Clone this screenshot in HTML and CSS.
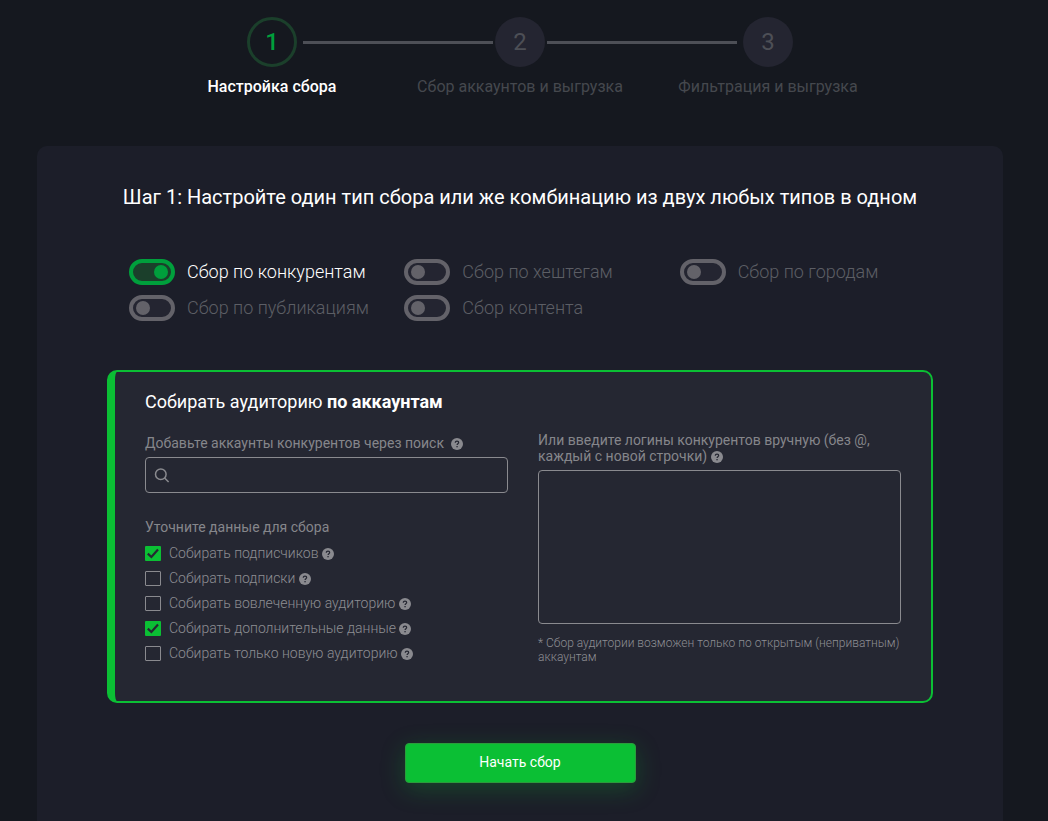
FILE: index.html
```html
<!DOCTYPE html>
<html lang="ru">
<head>
	<meta charset="UTF-8">
	<meta name="viewport" content="width=device-width, initial-scale=1">
	<title>Настройка сбора</title>
<link rel="stylesheet" href="styles.css">
</head>
<body>
	<svg class="sprite" width="0" height="0" aria-hidden="true">
		<symbol id="help" viewBox="0 0 12 12">
			<circle cx="6" cy="6" r="6" fill="#8a8a8f"/>
			<path d="M4.3 4.8C4.3 3.7 5 3.1 6 3.1s1.7.6 1.7 1.5c0 1.2-1.6 1.2-1.6 2.5" fill="none" stroke="#252732" stroke-width="1.2"/>
			<rect x="5.4" y="8" width="1.3" height="1.3" fill="#252732"/>
		</symbol>
	</svg>
	<ol class="steps">
		<li class="step active">
			<div class="track"><i class="line"></i><span class="num">1</span><i class="line"></i></div>
			<div class="name">Настройка сбора</div>
		</li>
		<li class="step middle">
			<div class="track"><i class="line"></i><span class="num">2</span><i class="line"></i></div>
			<div class="name">Сбор аккаунтов и выгрузка</div>
		</li>
		<li class="step">
			<div class="track"><i class="line"></i><span class="num">3</span><i class="line"></i></div>
			<div class="name">Фильтрация и выгрузка</div>
		</li>
	</ol>

	<form class="card">
		<h1>Шаг 1: Настройте один тип сбора или же комбинацию из двух любых типов в одном</h1>
		<div class="types">
			<label class="type"><input type="checkbox" class="switch" checked><span>Сбор по конкурентам</span></label>
			<label class="type"><input type="checkbox" class="switch"><span>Сбор по хештегам</span></label>
			<label class="type"><input type="checkbox" class="switch"><span>Сбор по городам</span></label>
			<label class="type"><input type="checkbox" class="switch"><span>Сбор по публикациям</span></label>
			<label class="type"><input type="checkbox" class="switch"><span>Сбор контента</span></label>
		</div>

		<section class="box">
			<h2>Собирать аудиторию <b>по аккаунтам</b></h2>
			<div class="columns">
				<div class="column search-column">
					<label class="caption" for="search">Добавьте аккаунты конкурентов через поиск <svg class="help wide"><use href="#help"/></svg></label>
					<div class="search">
						<svg class="loupe" viewBox="0 0 16 16"><circle cx="6.8" cy="7.2" r="5.3"/><path d="M10.6 11l4 4"/></svg>
						<input type="text" id="search">
					</div>
					<p class="caption data">Уточните данные для сбора</p>
					<ul class="options">
						<li><input type="checkbox" id="o1" checked><label for="o1">Собирать подписчиков</label><svg class="help"><use href="#help"/></svg></li>
						<li><input type="checkbox" id="o2"><label for="o2">Собирать подписки</label><svg class="help"><use href="#help"/></svg></li>
						<li><input type="checkbox" id="o3"><label for="o3">Собирать вовлеченную аудиторию</label><svg class="help"><use href="#help"/></svg></li>
						<li><input type="checkbox" id="o4" checked><label for="o4">Собирать дополнительные данные</label><svg class="help"><use href="#help"/></svg></li>
						<li><input type="checkbox" id="o5"><label for="o5">Собирать только новую аудиторию</label><svg class="help"><use href="#help"/></svg></li>
					</ul>
				</div>
				<div class="column">
					<label class="caption" for="logins">Или введите логины конкурентов вручную (без @, каждый с новой строчки) <svg class="help"><use href="#help"/></svg></label>
					<textarea id="logins"></textarea>
					<p class="note">* Сбор аудитории возможен только по открытым (неприватным) аккаунтам</p>
				</div>
			</div>
		</section>
		<button type="submit" class="start">Начать сбор</button>
	</form>
</body>
</html>
```
FILE: styles.css
```css
*{box-sizing: border-box;}
body,h1,h2,p,ol,ul,li,input,textarea{padding: 0;margin: 0;}
li{list-style: none;}
body{
	min-height: 100vh;
	padding: 17px 45px 0 37px;
	display: flex;
	flex-direction: column;
	background: #15181f;
	color: #fff;
	font-family: Roboto, "Liberation Sans", sans-serif;
}
.sprite{
	position: absolute;
}
.steps{
	width: 100%;
	max-width: 744px;
	margin: 0 auto;
	display: grid;
	grid-template-columns: repeat(3, 1fr);
}
.track{
	display: flex;
	align-items: center;
	gap: 6px;
}
.middle .track{
	gap: 2px;
}
.line{
	flex: 1;
	height: 3px;
	background: #4d4f56;
}
.step:first-child .line:first-child,
.step:last-child .line:last-child{
	background: none;
}
.num{
	width: 50px;
	height: 50px;
	line-height: 50px;
	border-radius: 50%;
	background: #242531;
	color: #4d4f56;
	font-size: 24px;
	text-align: center;
}
.name{
	margin-top: 10px;
	color: #45484e;
	font-size: 16px;
	line-height: 20px;
	text-align: center;
}
.active .num{
	line-height: 44px;
	border: 3px solid #1b3f2b;
	background: none;
	color: #009f3c;
	font-weight: 500;
}
.active .name{
	color: #fff;
	font-weight: 500;
}
.card{
	flex: 1;
	margin-top: 49px;
	padding: 38px 70px;
	border-radius: 10px 10px 0 0;
	background: #1c1e29;
}
h1{
	font-size: 20px;
	font-weight: 400;
	line-height: 26px;
	text-align: center;
}
.types{
	margin-top: 49px;
	padding-left: 22px;
	display: grid;
	grid-template-columns: repeat(3, 1fr);
	margin-right: -22px;
	row-gap: 10px;
}
.type{
	display: flex;
	align-items: center;
	gap: 12px;
	color: #5c5e65;
	font-size: 18px;
	font-weight: 300;
	line-height: 26px;
}
.type:has(:checked){
	color: #fff;
}
.switch{
	appearance: none;
	width: 46px;
	height: 26px;
	padding: 2px 3px;
	border: 4px solid #636269;
	border-radius: 13px;
	background: #242531;
	display: flex;
}
.switch::before{
	content: "";
	width: 14px;
	height: 14px;
	border-radius: 50%;
	background: #636269;
}
.switch:checked{
	justify-content: flex-end;
	border-color: #009f3c;
	background: #1b3f2b;
}
.switch:checked::before{
	background: #009f3c;
}
.box{
	margin-top: 49px;
	padding: 17px 30px 31px;
	border: 2px solid #0bbf34;
	border-left-width: 8px;
	border-radius: 10px;
	background: #252732;
}
h2{
	font-size: 18px;
	font-weight: 400;
	line-height: 26px;
}
.columns{
	margin-top: 17px;
	display: grid;
	grid-template-columns: 1fr 1fr;
	gap: 30px;
}
.column{
	display: flex;
	flex-direction: column;
}
.search-column{
	padding-top: 3px;
}
.caption{
	color: #85868b;
	font-size: 14px;
	line-height: 16px;
}
.help{
	width: 12px;
	height: 12px;
	vertical-align: -2px;
}
.wide{
	margin-left: 4px;
}
.search{
	height: 36px;
	margin-top: 6px;
	padding: 0 8px;
	border: 1px solid #8a8a8f;
	border-radius: 4px;
	display: flex;
	align-items: center;
	gap: 8px;
}
.search input{
	flex: 1;
	border: 0;
	outline: 0;
	background: none;
	color: #fff;
	font: inherit;
	font-size: 14px;
}
.loupe{
	width: 16px;
	height: 16px;
	fill: none;
	stroke: #8a8a8f;
	stroke-width: 1.5;
}
.data{
	margin-top: 26px;
}
.options{
	margin-top: 10px;
}
.options li{
	height: 25px;
	display: flex;
	align-items: flex-start;
	color: #8d8e93;
	font-size: 14px;
	font-weight: 300;
	line-height: 16px;
}
.options input{
	appearance: none;
	width: 16px;
	height: 15px;
	margin: 1px 8px 0 0;
	border: 1px solid #8a8a8f;
	border-radius: 1px;
}
.options input:checked{
	border: 0;
	background: #0bbf34 url("data:image/svg+xml,%3Csvg xmlns='http://www.w3.org/2000/svg' viewBox='0 0 16 15'%3E%3Cpath d='M2.8 7.6l3.6 3.4L13 3.6' fill='none' stroke='%23252732' stroke-width='2.2'/%3E%3C/svg%3E");
}
.options .help{
	margin: 3px 0 0 3px;
}
textarea{
	height: 154px;
	margin-top: 6px;
	padding: 8px;
	border: 1px solid #8a8a8f;
	border-radius: 4px;
	outline: 0;
	background: none;
	color: #fff;
	font: inherit;
	font-size: 14px;
	resize: none;
}
.note{
	margin-top: 12px;
	color: #8d8e93;
	font-size: 12px;
	font-weight: 300;
	line-height: 14px;
}
.start{
	width: 231px;
	height: 40px;
	margin: 40px auto 0;
	padding-bottom: 3px;
	display: block;
	border: 1px solid #2c9c3c;
	border-radius: 4px;
	background: #0bbf34;
	box-shadow: 0 6px 24px rgba(11,191,52,0.25);
	color: #fff;
	font: inherit;
	font-size: 14px;
	cursor: pointer;
}
```
